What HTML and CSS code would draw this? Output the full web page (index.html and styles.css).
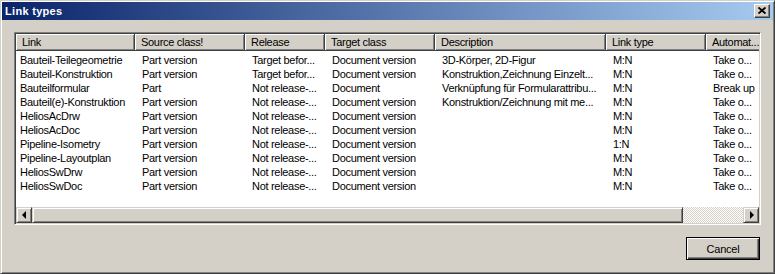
FILE: index.html
```html
<!DOCTYPE html>
<html lang="en">
<head>
  <meta charset="UTF-8" />
  <title>Link types</title>
  <link rel="stylesheet" href="styles.css">
</head>
<body>
  <div class="window">
    <div class="titlebar">
      <span class="title">Link types</span>
      <button class="close-btn" aria-label="Close">
        <svg width="8" height="7" viewBox="0 0 8 7"><path d="M0.5 0.5 L7.5 6.5 M7.5 0.5 L0.5 6.5" stroke="#000" stroke-width="1.8" fill="none"/></svg>
      </button>
    </div>

    <div class="content">
      <div class="listview">
        <div class="list-area">
          <div class="cols head">
            <div class="hcell">Link</div>
            <div class="hcell">Source class!</div>
            <div class="hcell">Release</div>
            <div class="hcell">Target class</div>
            <div class="hcell">Description</div>
            <div class="hcell">Link type</div>
            <div class="hcell">Automat...</div>
          </div>
          <div class="rows" id="rows">
            <!-- rows are filled from the list below -->
          </div>
        </div>
        <div class="hscroll">
          <div class="sb-btn"><span class="arrow-left"></span></div>
          <div class="sb-thumb"></div>
          <div class="sb-track"></div>
          <div class="sb-btn"><span class="arrow-right"></span></div>
        </div>
      </div>

      <div class="footer">
        <button class="cancel-btn">Cancel</button>
      </div>
    </div>
  </div>

  <script>
    const linkTypes = [
      ["Bauteil-Teilegeometrie", "Part version", "Target befor...", "Document version", "3D-Körper, 2D-Figur", "M:N", "Take o..."],
      ["Bauteil-Konstruktion", "Part version", "Target befor...", "Document version", "Konstruktion,Zeichnung Einzelt...", "M:N", "Take o..."],
      ["Bauteilformular", "Part", "Not release-...", "Document", "Verknüpfung für Formularattribu...", "M:N", "Break up"],
      ["Bauteil(e)-Konstruktion", "Part version", "Not release-...", "Document version", "Konstruktion/Zeichnung mit me...", "M:N", "Take o..."],
      ["HeliosAcDrw", "Part version", "Not release-...", "Document version", "", "M:N", "Take o..."],
      ["HeliosAcDoc", "Part version", "Not release-...", "Document version", "", "M:N", "Take o..."],
      ["Pipeline-Isometry", "Part version", "Not release-...", "Document version", "", "1:N", "Take o..."],
      ["Pipeline-Layoutplan", "Part version", "Not release-...", "Document version", "", "M:N", "Take o..."],
      ["HeliosSwDrw", "Part version", "Not release-...", "Document version", "", "M:N", "Take o..."],
      ["HeliosSwDoc", "Part version", "Not release-...", "Document version", "", "M:N", "Take o..."]
    ];

    const rows = document.getElementById("rows");
    linkTypes.forEach(item => {
      const row = document.createElement("div");
      row.className = "cols row";
      item.forEach(text => {
        const cell = document.createElement("div");
        cell.className = "cell";
        cell.textContent = text;
        row.appendChild(cell);
      });
      rows.appendChild(row);
    });
  </script>
</body>
</html>
```

FILE: styles.css
```css
body {
  margin: 0;
  font-family: "Liberation Sans", Arial, sans-serif;
  font-size: 11px;
  color: #000;
}

.window {
  width: 775px;
  height: 274px;
  box-sizing: border-box;
  background-color: #d4d0c8;
  border: 1px solid;
  border-color: #d4d0c8 #404040 #404040 #d4d0c8;
  box-shadow: inset 1px 1px #fff, inset -1px -1px #808080;
  padding: 1px;
  display: flex;
  flex-direction: column;
}

.titlebar {
  height: 18px;
  background: linear-gradient(to right, #0a246a, #a6caf0);
  display: flex;
  align-items: center;
  justify-content: space-between;
  padding: 0 3px 0 3px;
}
.title {
  color: #fff;
  font-weight: bold;
  font-size: 11px;
  letter-spacing: 0.3px;
}
.close-btn {
  width: 16px;
  height: 14px;
  padding: 0;
  background-color: #d4d0c8;
  border: 1px solid;
  border-color: #fff #404040 #404040 #fff;
  box-shadow: inset -1px -1px #808080;
  display: flex;
  align-items: center;
  justify-content: center;
  padding-bottom: 1px;
}
.close-btn svg {
  display: block;
}

.content {
  flex: 1;
  padding: 12px 12px 0 12px;
  display: flex;
  flex-direction: column;
}

.listview {
  height: 193px;
  box-sizing: border-box;
  border: 1px solid;
  border-color: #808080 #fff #fff #808080;
  box-shadow: inset 1px 1px #404040, inset -1px -1px #d4d0c8;
  padding: 1px;
  display: flex;
  flex-direction: column;
}
.list-area {
  flex: 1;
  background-color: #fff;
  overflow: hidden;
}

.cols {
  display: grid;
  grid-template-columns: 119px 110px 80px 110px 171px 100px 60px;
  white-space: nowrap;
}
.head {
  height: 17px;
}
.hcell {
  background-color: #d4d0c8;
  border-right: 1px solid #404040;
  border-bottom: 1px solid #404040;
  box-shadow: inset 1px 1px #fff, inset -1px -1px #808080;
  padding-left: 6px;
  line-height: 16px;
  letter-spacing: -0.3px;
  overflow: hidden;
}

.rows {
  padding-top: 2px;
}
.row {
  height: 14px;
  line-height: 14px;
}
.cell {
  padding-left: 7px;
  letter-spacing: -0.3px;
  overflow: hidden;
}
.cell:first-child {
  padding-left: 4px;
}

.hscroll {
  height: 16px;
  display: flex;
}
.sb-btn, .sb-thumb {
  box-sizing: border-box;
  height: 16px;
  background-color: #d4d0c8;
  border: 1px solid;
  border-color: #d4d0c8 #404040 #404040 #d4d0c8;
  box-shadow: inset 1px 1px #fff, inset -1px -1px #808080;
}
.sb-btn {
  width: 16px;
  display: flex;
  align-items: center;
  justify-content: center;
}
.sb-thumb {
  width: 651px;
}
.sb-track {
  flex: 1;
  background: repeating-conic-gradient(#fff 0 25%, #d4d0c8 0 50%) 0 0 / 2px 2px;
}
.arrow-left {
  border-top: 4px solid transparent;
  border-bottom: 4px solid transparent;
  border-right: 4px solid #000;
  margin-right: 1px;
}
.arrow-right {
  border-top: 4px solid transparent;
  border-bottom: 4px solid transparent;
  border-left: 4px solid #000;
  margin-left: 1px;
}

.footer {
  display: flex;
  justify-content: flex-end;
  margin-top: 12px;
  padding-right: 1px;
}
.cancel-btn {
  width: 74px;
  height: 23px;
  background-color: #d4d0c8;
  border: 1px solid #000;
  box-shadow: inset 1px 1px #fff, inset -1px -1px #404040, inset -2px -2px #808080;
  font-family: "Liberation Sans", Arial, sans-serif;
  font-size: 11px;
  letter-spacing: -0.2px;
  color: #000;
  padding: 0;
}
```
